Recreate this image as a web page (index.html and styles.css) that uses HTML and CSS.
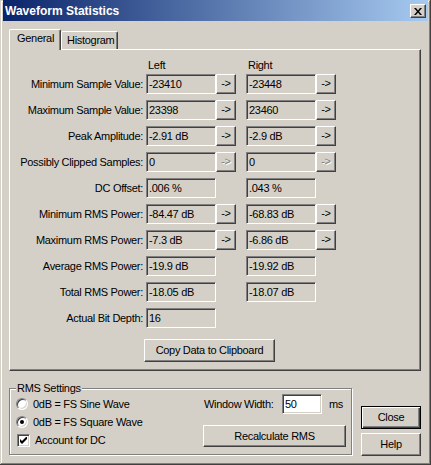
FILE: index.html
```html
<!DOCTYPE html>
<html>
<head>
<meta charset="utf-8">
<link rel="stylesheet" href="styles.css">
</head>
<body>
<div class="window">
  <div class="titlebar">
    <span class="title">Waveform Statistics</span>
    <div class="close-x"><svg width="8" height="7" viewBox="0 0 8 7"><path d="M0 0h2l2 2.5L6 0h2L5 3.5 8 7H6L4 4.5 2 7H0l3-3.5z" fill="#000"/></svg></div>
  </div>
  <div class="client">
    <div class="tabs">
      <div class="tab active">General</div>
      <div class="tab">Histogram</div>
    </div>
    <div class="panel">
      <div class="stats head">
        <div></div><div class="colhead">Left</div><div class="colhead">Right</div>
      </div>
      <div class="stats">
        <div class="lbl">Minimum Sample Value:</div>
        <div class="cell"><div class="field">-23410</div><div class="arrow">-&gt;</div></div>
        <div class="cell"><div class="field">-23448</div><div class="arrow">-&gt;</div></div>

        <div class="lbl">Maximum Sample Value:</div>
        <div class="cell"><div class="field">23398</div><div class="arrow">-&gt;</div></div>
        <div class="cell"><div class="field">23460</div><div class="arrow">-&gt;</div></div>

        <div class="lbl">Peak Amplitude:</div>
        <div class="cell"><div class="field">-2.91 dB</div><div class="arrow">-&gt;</div></div>
        <div class="cell"><div class="field">-2.9 dB</div><div class="arrow">-&gt;</div></div>

        <div class="lbl">Possibly Clipped Samples:</div>
        <div class="cell"><div class="field">0</div><div class="arrow disabled">-&gt;</div></div>
        <div class="cell"><div class="field">0</div><div class="arrow disabled">-&gt;</div></div>

        <div class="lbl">DC Offset:</div>
        <div class="cell"><div class="field">.006 %</div></div>
        <div class="cell"><div class="field">.043 %</div></div>

        <div class="lbl">Minimum RMS Power:</div>
        <div class="cell"><div class="field">-84.47 dB</div><div class="arrow">-&gt;</div></div>
        <div class="cell"><div class="field">-68.83 dB</div><div class="arrow">-&gt;</div></div>

        <div class="lbl">Maximum RMS Power:</div>
        <div class="cell"><div class="field">-7.3 dB</div><div class="arrow">-&gt;</div></div>
        <div class="cell"><div class="field">-6.86 dB</div><div class="arrow">-&gt;</div></div>

        <div class="lbl">Average RMS Power:</div>
        <div class="cell"><div class="field">-19.9 dB</div></div>
        <div class="cell"><div class="field">-19.92 dB</div></div>

        <div class="lbl">Total RMS Power:</div>
        <div class="cell"><div class="field">-18.05 dB</div></div>
        <div class="cell"><div class="field">-18.07 dB</div></div>

        <div class="lbl">Actual Bit Depth:</div>
        <div class="cell"><div class="field">16</div></div>
        <div class="cell"></div>
      </div>
      <div class="copy-row"><div class="btn copy">Copy Data to Clipboard</div></div>
    </div>
    <div class="bottom">
      <fieldset class="group">
        <legend>RMS Settings</legend>
        <div class="group-body">
          <div class="options">
            <div class="opt"><span class="radio"></span><span>0dB = FS Sine Wave</span></div>
            <div class="opt"><span class="radio checked"></span><span>0dB = FS Square Wave</span></div>
            <div class="opt chk-row"><span class="checkbox"><svg width="7" height="7" viewBox="0 0 7 7"><path d="M0 2v3l2 2 5-5V-1L2 4z" fill="#000"/></svg></span><span>Account for DC</span></div>
          </div>
          <div class="rms-right">
            <div class="ww-row"><span class="ww-label">Window Width:</span><div class="input">50</div><span class="ms">ms</span></div>
            <div class="btn recalc">Recalculate RMS</div>
          </div>
        </div>
      </fieldset>
      <div class="side-buttons">
        <div class="btn default">Close</div>
        <div class="btn">Help</div>
      </div>
    </div>
  </div>
</div>
</body>
</html>
```

FILE: styles.css
```css
* { box-sizing: border-box; }
html, body { margin: 0; padding: 0; }
body {
  font-family: "Liberation Sans", Arial, sans-serif;
  font-size: 11px;
  letter-spacing: -0.3px;
  color: #000;
  background: #d4d0c8;
}
.window {
  width: 431px;
  height: 465px;
  background: #d4d0c8;
  padding: 0 3px 3px 3px;
  box-shadow: inset -1px -1px #404040, inset 1px 1px #d4d0c8, inset -2px -2px #808080, inset 2px 2px #fff;
  display: flex;
  flex-direction: column;
}
.titlebar {
  height: 21px;
  background: linear-gradient(to right, #0a246a, #a6caf0);
  display: flex;
  align-items: center;
  justify-content: space-between;
  padding: 0 2px 0 2px;
}
.title {
  color: #fff;
  font-weight: bold;
  font-size: 12px;
  letter-spacing: 0;
}
.close-x {
  width: 16px;
  height: 14px;
  background: #d4d0c8;
  border: 1px solid;
  border-color: #fff #404040 #404040 #fff;
  box-shadow: inset -1px -1px #808080;
  display: flex;
  align-items: center;
  justify-content: center;
  margin-top: 1px;
}
.client {
  padding: 8px 7px 0 6px;
}
.tabs {
  height: 20px;
  display: flex;
  align-items: flex-end;
}
.tab {
  height: 18px;
  padding: 0 4px 0 5px;
  border-left: 1px solid #fff;
  border-top: 1px solid #fff;
  border-right: 1px solid #404040;
  box-shadow: inset -1px 0 #808080;
  border-radius: 2px 2px 0 0;
  line-height: 16px;
  background: #d4d0c8;
}
.tab.active {
  height: 21px;
  margin-bottom: -1px;
  padding: 0 6px 0 7px;
  position: relative;
  z-index: 1;
  line-height: 17px;
  width: 52px;
}
.tab:not(.active) { width: 57px; }
.panel {
  width: 412px;
  height: 322px;
  border: 1px solid;
  border-color: #fff #404040 #404040 #fff;
  box-shadow: inset -1px -1px #808080;
  display: flex;
  flex-direction: column;
}
.stats {
  display: grid;
  grid-template-columns: 136px 100px 90px;
  column-gap: 0;
  row-gap: 6px;
}
.stats.head {
  padding-top: 9px;
  margin-bottom: 2px;
}
.colhead {
  line-height: 13px;
  padding-left: 2px;
}
.lbl {
  text-align: right;
  padding-right: 3px;
  line-height: 20px;
  white-space: nowrap;
}
.cell {
  display: flex;
  height: 20px;
}
.field {
  width: 70px;
  height: 20px;
  border: 1px solid;
  border-color: #808080 #fff #fff #808080;
  box-shadow: inset 1px 1px #404040, inset -1px -1px #d4d0c8;
  padding-left: 2px;
  line-height: 18px;
  white-space: nowrap;
}
.arrow {
  width: 20px;
  height: 20px;
  border: 1px solid;
  border-color: #fff #404040 #404040 #fff;
  box-shadow: inset -1px -1px #808080;
  text-align: center;
  line-height: 17px;
}
.arrow.disabled {
  color: #808080;
  text-shadow: 1px 1px #fff;
}
.btn {
  border: 1px solid;
  border-color: #fff #404040 #404040 #fff;
  box-shadow: inset -1px -1px #808080;
  text-align: center;
  background: #d4d0c8;
}
.copy-row {
  margin-top: 11px;
  padding-left: 134px;
}
.copy {
  width: 131px;
  height: 23px;
  line-height: 21px;
}
.bottom {
  display: flex;
  align-items: flex-start;
  margin-top: 11px;
}
.group {
  margin: 0;
  width: 344px;
  padding: 0 5px 5px 6px;
  border: 1px solid #808080;
  box-shadow: inset 1px 1px #fff, 1px 1px #fff;
  min-width: 0;
}
.group legend {
  padding: 0 1px;
  line-height: 13px;
  background: #d4d0c8;
}
.group-body {
  display: flex;
  justify-content: space-between;
}
.options {
  display: flex;
  flex-direction: column;
}
.opt {
  height: 18px;
  display: flex;
  align-items: center;
  gap: 5px;
}
.radio {
  width: 12px;
  height: 12px;
  border-radius: 50%;
  background: #fff;
  border: 1px solid;
  border-color: #808080 #fff #fff #808080;
  box-shadow: inset 1px 1px #404040, inset -1px -1px #d4d0c8;
  display: flex;
  align-items: center;
  justify-content: center;
}
.radio.checked::after {
  content: "";
  width: 4px;
  height: 4px;
  border-radius: 50%;
  background: #000;
}
.chk-row { gap: 5px; padding-left: 1px; }
.checkbox {
  width: 13px;
  height: 13px;
  background: #fff;
  border: 1px solid;
  border-color: #808080 #fff #fff #808080;
  box-shadow: inset 1px 1px #404040, inset -1px -1px #d4d0c8;
  display: flex;
  align-items: center;
  justify-content: center;
}
.rms-right {
  width: 143px;
  margin-top: -1px;
  display: flex;
  flex-direction: column;
}
.ww-row {
  display: flex;
  align-items: center;
  height: 20px;
  padding-left: 1px;
}
.ww-label {
  width: 78px;
  white-space: nowrap;
}
.input {
  width: 40px;
  height: 20px;
  background: #fff;
  border: 1px solid;
  border-color: #808080 #fff #fff #808080;
  box-shadow: inset 1px 1px #404040, inset -1px -1px #d4d0c8;
  padding-left: 2px;
  line-height: 18px;
}
.ms { margin-left: 7px; }
.recalc {
  margin-top: 11px;
  height: 22px;
  line-height: 20px;
}
.side-buttons {
  margin-left: 9px;
  margin-top: 24px;
  display: flex;
  flex-direction: column;
  gap: 4px;
}
.side-buttons .btn {
  width: 60px;
  height: 23px;
  line-height: 21px;
}
.side-buttons .btn.default {
  border: 1px solid #000;
  box-shadow: inset 1px 1px #fff, inset -1px -1px #404040, inset -2px -2px #808080;
}
```
